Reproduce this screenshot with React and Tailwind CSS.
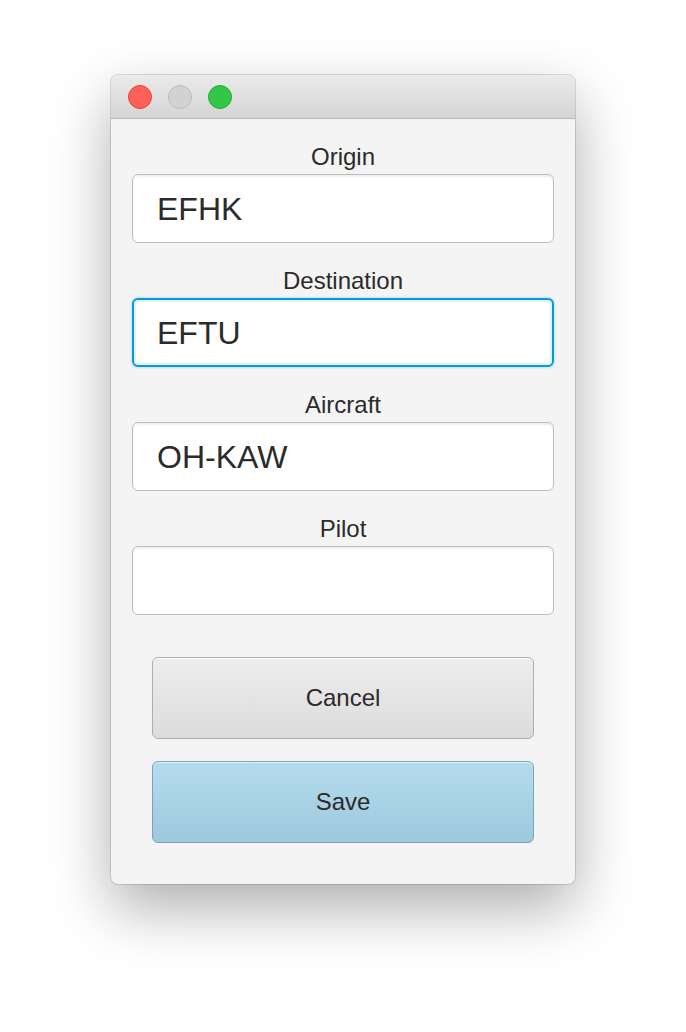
import React from 'react';

const Field = ({ label, value, focused }) => (
  <div className="flex flex-col">
    <label className="h-[28px] leading-[28px] text-center text-[24px] text-[#2b2b2b]">{label}</label>
    <div className="mt-[3px]">
      {focused ? (
        <div className="h-[69px] rounded-[6px] border-2 border-[#0a98d8] bg-white shadow-[0_0_0_1.5px_#cfe9f6,inset_0_0_0_2px_#dff1fa] flex items-center px-[23px]">
          <span className="text-[32px] text-[#2b2b2b]">{value}</span>
        </div>
      ) : (
        <div className="h-[69px] rounded-[6px] border border-[#bdbdbd] bg-white shadow-[inset_0_2px_2px_rgba(0,0,0,0.06)] flex items-center px-[24px]">
          <span className="text-[32px] text-[#2b2b2b]">{value}</span>
        </div>
      )}
    </div>
  </div>
);

const App = () => {
  return (
    <div className="min-h-[1032px] bg-white flex justify-center pt-[75px]" style={{ fontFamily: '"Liberation Sans", Arial, sans-serif' }}>
      <div className="w-[464px] h-[809px] rounded-[7px] overflow-hidden bg-[#f4f4f4] shadow-[0_24px_60px_rgba(0,0,0,0.32),0_0_0_1px_rgba(0,0,0,0.13)] flex flex-col">
        {/* Title bar */}
        <div className="h-[44px] shrink-0 bg-gradient-to-b from-[#ebebeb] to-[#d4d4d4] border-b border-[#b9b9b9] flex items-center pl-[17px] gap-[16px]">
          <span className="w-[24px] h-[24px] rounded-full bg-[#fe5f57] border border-[#e2463f]" />
          <span className="w-[24px] h-[24px] rounded-full bg-[#d2d2d2] border border-[#bcbcbc]" />
          <span className="w-[24px] h-[24px] rounded-full bg-[#33c748] border border-[#27aa36]" />
        </div>

        {/* Form */}
        <div className="flex-1 flex flex-col px-[21px] pt-[24px] pb-[41px]">
          <div className="flex flex-col gap-[24px]">
            <Field label="Origin" value="EFHK" />
            <Field label="Destination" value="EFTU" focused />
            <Field label="Aircraft" value="OH-KAW" />
            <Field label="Pilot" value="" />
          </div>

          <div className="flex flex-col gap-[22px] mt-[42px] px-[20px]">
            <button className="h-[82px] rounded-[6px] border-[1.5px] border-[#aeaeae] bg-gradient-to-b from-[#ededed] to-[#dcdcdc] shadow-[inset_0_1px_0_rgba(255,255,255,0.9)] text-[24px] text-[#2b2b2b]">
              Cancel
            </button>
            <button className="h-[82px] rounded-[6px] border-[1.5px] border-[#7ba3b8] bg-gradient-to-b from-[#b4dcee] to-[#9ec8dc] shadow-[inset_0_1px_0_rgba(255,255,255,0.6)] text-[24px] text-[#2b2b2b]">
              Save
            </button>
          </div>
        </div>
      </div>
    </div>
  );
};

export default App;
